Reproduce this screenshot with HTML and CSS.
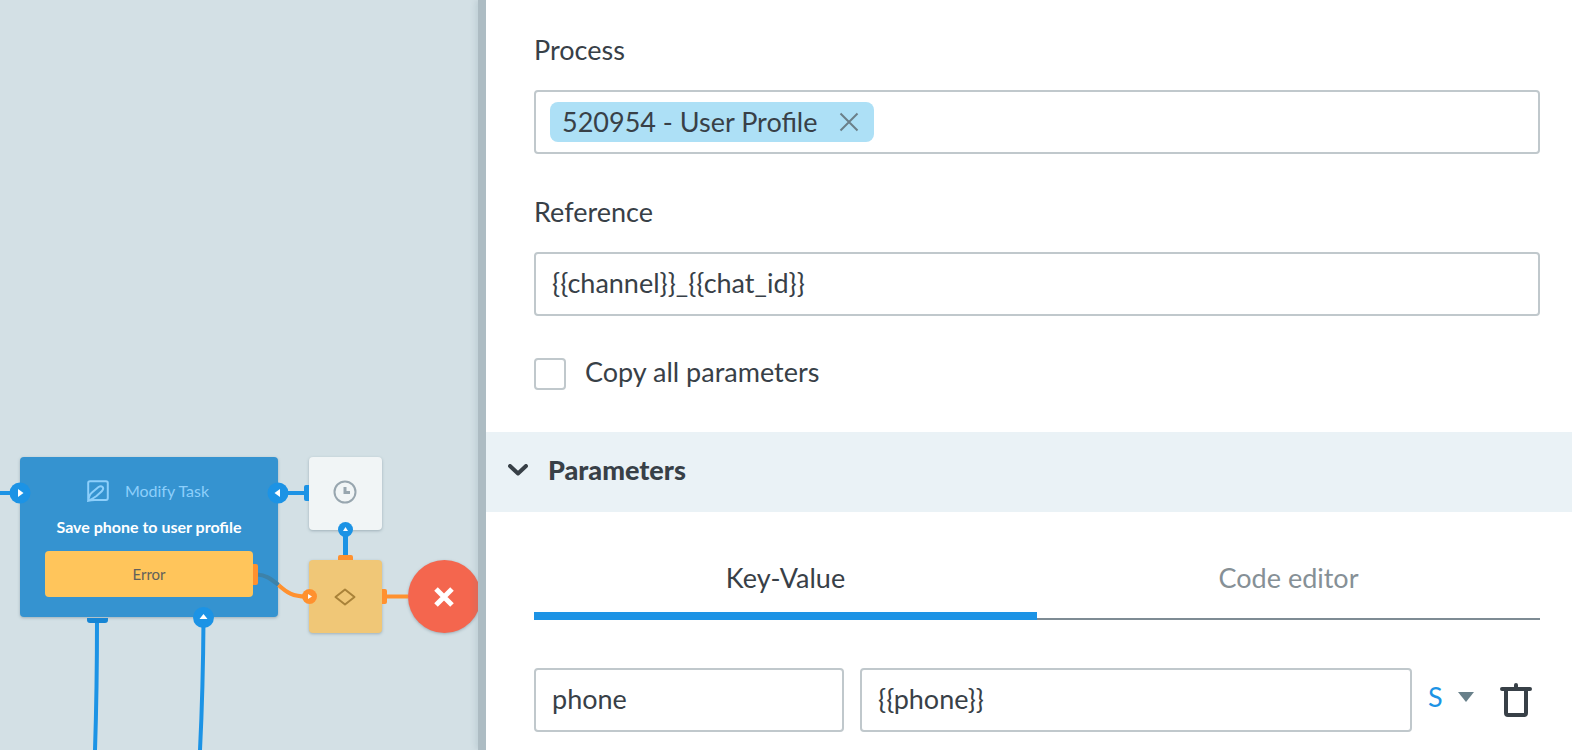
FILE: index.html
```html
<!DOCTYPE html>
<html lang="en">
<head>
<meta charset="utf-8">
<meta name="viewport" content="width=device-width, initial-scale=1">
<title>Modify Task</title>
<link rel="stylesheet" href="styles.css">
</head>
<body>
<div class="workspace">
  <section class="canvas" aria-label="Process diagram">
    <article class="node task">
      <header class="task-type">
        <svg class="task-icon" viewBox="0 0 22 22" aria-hidden="true"><path d="M1.200 20.800V3Q1.200 1.200 3 1.200H19Q20.800 1.200 20.800 3V18Q20.800 20 19 20H8Q4 20 1.200 20.800Q2 15 5 12.500L11.500 7Q14 5.500 15.500 7T15 11L9.500 16Q6 18.500 2 20.500"/></svg>
        <span>Modify Task</span>
      </header>
      <h3 class="task-title">Save phone to user profile</h3>
      <div class="task-error">Error</div>
    </article>
    <div class="node timer">
      <svg class="clock" viewBox="0 0 24 24" role="img" aria-label="Timer"><circle cx="12" cy="12" r="10.500"/><path d="M12 7V12.500H17" stroke-width="3"/></svg>
    </div>
    <div class="node condition">
      <svg class="diamond" viewBox="0 0 22 18" role="img" aria-label="Condition"><path d="M1.500 9L11 1.500L20.500 9L11 16.500Z"/></svg>
    </div>
    <div class="node stop">
      <svg class="cross" viewBox="0 0 20 20" role="img" aria-label="Error end"><path d="M2 2L18 18M18 2L2 18"/></svg>
    </div>
    <svg class="links" width="478" height="750" viewBox="0 0 478 750" aria-hidden="true">
      <g fill="none" stroke="#1c93e5" stroke-width="4">
        <path d="M0 493H20M278 493H306M97 620Q97 690 95 750M203.500 620Q203 690 200 750"/>
        <path d="M345.500 530V556" stroke-width="5"/>
      </g>
      <path d="M257 574.500C267 575 272 580 278.500 585" fill="none" stroke="#3d82a9" stroke-width="4"/>
      <path d="M278.500 585C286 592 293 597 308 596.500M386 596.500H408" fill="none" stroke="#ff912f" stroke-width="4"/>
      <g fill="#ff912f">
        <path d="M253 564h3q2 0 2 2v17q0 2-2 2h-3zM338 560v-3q0-2 2-2h11q2 0 2 2v3zM382 589h3q2 0 2 2v11q0 2-2 2h-3z"/>
        <circle cx="309.500" cy="596.500" r="7.500"/>
      </g>
      <path d="M87 618H108V620Q108 623 105 623H90Q87 623 87 620Z" fill="#1685d4"/>
      <g fill="#1c93e5">
        <circle cx="20" cy="493" r="10.500"/>
        <circle cx="278" cy="493" r="10.500"/>
        <circle cx="203.500" cy="617.500" r="10.500"/>
        <circle cx="345.500" cy="529.500" r="7.500"/>
        <path d="M309 485h-3q-2 0-2 2v12q0 2 2 2h3z"/>
      </g>
      <path d="M18 489L23.500 493L18 497ZM280 489L274.500 493L280 497ZM199.500 619L203.500 614L207.500 619ZM343 531L345.500 527L348 531ZM308 594L312 596.500L308 599Z" fill="#fff"/>
    </svg>
  </section>
  <div class="divider"></div>
  <main class="panel">
    <form class="form">
      <div class="field">
        <label class="label" for="process">Process</label>
        <div class="box tag-box">
          <span class="tag">520954 - User Profile
            <button class="tag-remove" type="button" aria-label="Remove process"><svg viewBox="0 0 20 20" aria-hidden="true"><path d="M1.500 1.500L18.500 18.500M18.500 1.500L1.500 18.500"/></svg></button>
          </span>
          <input class="tag-input" id="process" type="text">
        </div>
      </div>
      <div class="field">
        <label class="label" for="reference">Reference</label>
        <input class="box" id="reference" type="text" value="{{channel}}_{{chat_id}}">
      </div>
      <label class="check"><input class="check-box" type="checkbox"><span class="check-text">Copy all parameters</span></label>
    </form>
    <h2 class="section">
      <button class="section-toggle" type="button" aria-expanded="true">
        <svg class="chevron" viewBox="0 0 20 12" aria-hidden="true"><path d="M2 2L10 9.500L18 2"/></svg>
        Parameters
      </button>
    </h2>
    <div class="parameters">
      <div class="tabs" role="tablist">
        <button class="tab active" type="button" role="tab" aria-selected="true">Key-Value</button>
        <button class="tab" type="button" role="tab" aria-selected="false">Code editor</button>
      </div>
      <div class="row">
        <input class="box" type="text" aria-label="Key" value="phone">
        <input class="box" type="text" aria-label="Value" value="{{phone}}">
        <div class="type">
          <select class="type-select" aria-label="Value type"><option>S</option><option>N</option><option>B</option></select>
          <svg class="caret" viewBox="0 0 16 10" aria-hidden="true"><path d="M0 0H16L8 10Z"/></svg>
        </div>
        <button class="trash" type="button" aria-label="Delete parameter"><svg viewBox="0 0 32 34" aria-hidden="true"><path d="M2 6H30M16 2V6M6 6V30Q6 32 8 32H24Q26 32 26 30V6"/></svg></button>
      </div>
    </div>
  </main>
</div>
</body>
</html>
```

FILE: styles.css
```css
* { box-sizing: border-box; }
body {
  margin: 0;
  font-family: Lato, "Noto Sans", sans-serif;
  font-size: 27px;
  line-height: 32px;
  color: #384047;
  background: #fff;
}
button, input, select { font: inherit; color: inherit; }
button { padding: 0; border: 0; background: none; cursor: pointer; }
svg { display: block; fill: none; }

.workspace {
  display: grid;
  grid-template-columns: minmax(0, 239fr) 8px minmax(0, 543fr);
  min-height: 100vh;
}
.divider { background: #adbcc3; box-shadow: -2px 0 6px rgba(100, 130, 145, .2); z-index: 1; }
.panel { position: relative; z-index: 2; background: #fff; }

/* Diagram */
.canvas { position: relative; overflow: hidden; background: #d3e0e5; }
.node {
  position: absolute;
  display: flex;
  align-items: center;
  justify-content: center;
  border-radius: 4px;
  box-shadow: 0 1px 3px rgba(60, 85, 100, .35);
}
.links { position: absolute; left: 0; top: 0; }
.task {
  left: 20px;
  top: 457px;
  width: 258px;
  height: 160px;
  padding: 22px 25px 20px;
  flex-direction: column;
  align-items: stretch;
  justify-content: space-between;
  background: #3593d0;
  font-size: 16px;
  line-height: 24px;
}
.task-type {
  display: flex;
  align-items: center;
  justify-content: center;
  gap: 16px;
  padding-right: 2px;
  color: #8dcffb;
}
.task-icon { width: 22px; height: 22px; stroke: currentColor; stroke-width: 2; }
.task-title { margin: 0; color: #fff; font-size: 16px; font-weight: 700; text-align: center; white-space: nowrap; }
.task-error {
  padding: 11px;
  border-radius: 4px;
  background: #ffc55b;
  color: #62605a;
  font-size: 15px;
  text-align: center;
}
.timer { left: 309px; top: 457px; width: 73px; height: 73px; background: #f1f5f6; }
.clock { width: 24px; height: 24px; margin: 0 2px 3px 0; stroke: #98a6af; stroke-width: 2; }
.condition { left: 309px; top: 560px; width: 73px; height: 73px; background: #f0c777; }
.diamond { width: 22px; height: 18px; margin-right: 2px; stroke: #a98239; stroke-width: 2; stroke-linejoin: round; }
.stop { left: 408px; top: 560px; width: 73px; height: 73px; border-radius: 50%; background: #f4664e; }
.cross { width: 20px; height: 20px; margin-right: 2px; stroke: #fff; stroke-width: 5; }

/* Settings panel */
.form { display: flex; flex-direction: column; gap: 42px; padding: 34px 32px 42px 48px; }
.field { display: flex; flex-direction: column; gap: 24px; }
.box {
  width: 100%;
  min-width: 0;
  height: 64px;
  padding: 0 16px 4px;
  border: 2px solid #c0c8cc;
  border-radius: 4px;
  background: #fff;
}
.tag-box { display: flex; align-items: center; padding: 0 14px; }
.tag {
  display: flex;
  align-items: center;
  gap: 22px;
  height: 40px;
  padding: 0 15px 0 12px;
  border-radius: 8px;
  background: #ade0f6;
  white-space: nowrap;
}
.tag-remove { width: 20px; }
.tag-remove svg { stroke: #6b7f89; stroke-width: 2; }
.tag-input { flex: 1; min-width: 0; border: 0; outline: 0; background: none; }
.check { display: flex; align-items: center; gap: 19px; height: 32px; }
.check-text { padding-bottom: 4px; }
.check-box {
  appearance: none;
  width: 32px;
  height: 32px;
  margin: 0;
  border: 2px solid #c0c8cc;
  border-radius: 4px;
}
.check-box:checked { background: #1c93e5; }
.section { margin: 0; background: #eaf2f6; font-size: 27px; }
.section-toggle {
  display: flex;
  align-items: center;
  gap: 20px;
  width: 100%;
  height: 80px;
  padding: 0 22px 4px;
  font-weight: 900;
}
.chevron { width: 20px; height: 12px; stroke: currentColor; stroke-width: 4; stroke-linecap: round; stroke-linejoin: round; }
.parameters { padding: 38px 32px 18px 48px; }
.tabs { display: flex; box-shadow: inset 0 -2px #7e8b94; }
.tab { flex: 1; height: 70px; padding-bottom: 6px; border-bottom: 8px solid transparent; color: #869096; }
.active { border-bottom-color: #1c93e5; color: #384047; }
.row {
  display: grid;
  grid-template-columns: minmax(0, 310fr) minmax(0, 552fr) 56px 32px;
  align-items: center;
  gap: 16px;
  padding: 48px 8px 0 0;
}
.type { position: relative; }
.type-select { display: block; appearance: none; width: 56px; height: 40px; padding: 0 0 6px; border: 0; background: none; color: #1c93e5; }
.caret { position: absolute; right: 10px; top: 12px; width: 16px; height: 10px; fill: #68808a; pointer-events: none; }
.trash svg { stroke: #384047; stroke-width: 4; stroke-linecap: round; }
```
